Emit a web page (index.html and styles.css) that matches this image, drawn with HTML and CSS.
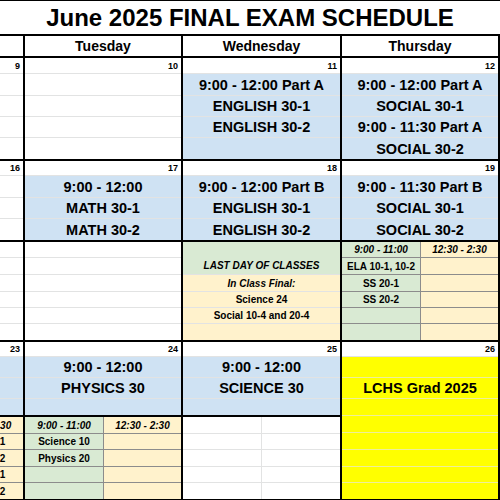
FILE: index.html
```html
<!DOCTYPE html>
<html>
<head>
<meta charset="utf-8">
<link rel="stylesheet" href="styles.css">
</head>
<body>
<div class="sheet">
  <div class="title">June 2025 FINAL EXAM SCHEDULE</div>
  <div class="grid">
    <div class="head"></div>
    <div class="head">Tuesday</div>
    <div class="head">Wednesday</div>
    <div class="head">Thursday</div>

    <!-- week 1 -->
    <div class="day">
      <div class="row h16 date">9</div>
      <div class="row h22"></div>
      <div class="row h21"></div>
      <div class="row h21"></div>
      <div class="row h21"></div>
    </div>
    <div class="day">
      <div class="row h16 date">10</div>
      <div class="row h22"></div>
      <div class="row h21"></div>
      <div class="row h21"></div>
      <div class="row h21"></div>
    </div>
    <div class="day">
      <div class="row h16 date">11</div>
      <div class="row h22 blue big">9:00 - 12:00 Part A</div>
      <div class="row h21 blue big">ENGLISH 30-1</div>
      <div class="row h21 blue big">ENGLISH 30-2</div>
      <div class="row h21 blue big"></div>
    </div>
    <div class="day">
      <div class="row h16 date">12</div>
      <div class="row h22 blue big">9:00 - 12:00 Part A</div>
      <div class="row h21 blue big">SOCIAL 30-1</div>
      <div class="row h21 blue big">9:00 - 11:30 Part A</div>
      <div class="row h21 blue big">SOCIAL 30-2</div>
    </div>

    <!-- week 2 top -->
    <div class="day">
      <div class="row h15 date">16</div>
      <div class="row h22"></div>
      <div class="row h21"></div>
      <div class="row h21"></div>
    </div>
    <div class="day">
      <div class="row h15 date">17</div>
      <div class="row h22 blue big">9:00 - 12:00</div>
      <div class="row h21 blue big">MATH 30-1</div>
      <div class="row h21 blue big">MATH 30-2</div>
    </div>
    <div class="day">
      <div class="row h15 date">18</div>
      <div class="row h22 blue big">9:00 - 12:00 Part B</div>
      <div class="row h21 blue big">ENGLISH 30-1</div>
      <div class="row h21 blue big">ENGLISH 30-2</div>
    </div>
    <div class="day">
      <div class="row h15 date">19</div>
      <div class="row h22 blue big">9:00 - 11:30 Part B</div>
      <div class="row h21 blue big">SOCIAL 30-1</div>
      <div class="row h21 blue big">SOCIAL 30-2</div>
    </div>

    <!-- week 2 bottom -->
    <div class="day">
      <div class="row h16"></div>
      <div class="row h17"></div>
      <div class="row h17"></div>
      <div class="row h16"></div>
      <div class="row h16"></div>
      <div class="row h16"></div>
    </div>
    <div class="day">
      <div class="row h16"></div>
      <div class="row h17"></div>
      <div class="row h17"></div>
      <div class="row h16"></div>
      <div class="row h16"></div>
      <div class="row h16"></div>
    </div>
    <div class="day">
      <div class="row h33 green small em bottom">LAST DAY OF CLASSES</div>
      <div class="row h17 cream small em">In Class Final:</div>
      <div class="row h16 cream small">Science 24</div>
      <div class="row h16 cream small">Social 10-4 and 20-4</div>
      <div class="row h16 cream"></div>
    </div>
    <div class="day split">
      <div class="col">
        <div class="row h16 green small em dark">9:00 - 11:00</div>
        <div class="row h17 green small dark">ELA 10-1, 10-2</div>
        <div class="row h17 green small dark">SS 20-1</div>
        <div class="row h16 green small dark">SS 20-2</div>
        <div class="row h16 green dark"></div>
        <div class="row h16 green dark"></div>
      </div>
      <div class="col">
        <div class="row h16 cream small em dark">12:30 - 2:30</div>
        <div class="row h17 cream dark"></div>
        <div class="row h17 cream dark"></div>
        <div class="row h16 cream dark"></div>
        <div class="row h16 cream dark"></div>
        <div class="row h16 cream dark"></div>
      </div>
    </div>

    <!-- week 3 top -->
    <div class="day">
      <div class="row h15 date">23</div>
      <div class="row h21 blue big"></div>
      <div class="row h21 blue big"></div>
      <div class="row h16 blue"></div>
    </div>
    <div class="day">
      <div class="row h15 date">24</div>
      <div class="row h21 blue big">9:00 - 12:00</div>
      <div class="row h21 blue big">PHYSICS 30</div>
      <div class="row h16 blue"></div>
    </div>
    <div class="day">
      <div class="row h15 date">25</div>
      <div class="row h21 blue big">9:00 - 12:00</div>
      <div class="row h21 blue big">SCIENCE 30</div>
      <div class="row h16 blue"></div>
    </div>
    <div class="day grad">
      <div class="row h15 date">26</div>
      <div class="row h21 yellow"></div>
      <div class="row h21 yellow big">LCHS Grad 2025</div>
      <div class="row h17 yellow"></div>
      <div class="row h17 yellow"></div>
      <div class="row h17 yellow"></div>
      <div class="row h17 yellow"></div>
      <div class="row h16 yellow"></div>
      <div class="row h16 yellow"></div>
    </div>

    <!-- week 3 bottom -->
    <div class="day split">
      <div class="col">
        <div class="row h17 green dark"></div>
        <div class="row h16 green dark"></div>
        <div class="row h17 green dark"></div>
        <div class="row h16 green dark"></div>
        <div class="row h16 green dark"></div>
      </div>
      <div class="col">
        <div class="row h17 cream small em dark">12:30 - 2:30</div>
        <div class="row h16 cream small dark">ELA 20-1</div>
        <div class="row h17 cream small dark">ELA 20-2</div>
        <div class="row h16 cream small dark">ELA 10-1</div>
        <div class="row h16 cream small dark">ELA 10-2</div>
      </div>
    </div>
    <div class="day split">
      <div class="col">
        <div class="row h17 green small em dark">9:00 - 11:00</div>
        <div class="row h16 green small dark">Science 10</div>
        <div class="row h17 green small dark">Physics 20</div>
        <div class="row h16 green dark"></div>
        <div class="row h16 green dark"></div>
      </div>
      <div class="col">
        <div class="row h17 cream small em dark">12:30 - 2:30</div>
        <div class="row h16 cream dark"></div>
        <div class="row h17 cream dark"></div>
        <div class="row h16 cream dark"></div>
        <div class="row h16 cream dark"></div>
      </div>
    </div>
    <div class="day split faint">
      <div class="col">
        <div class="row h17"></div>
        <div class="row h16"></div>
        <div class="row h17"></div>
        <div class="row h16"></div>
        <div class="row h16"></div>
      </div>
      <div class="col">
        <div class="row h17"></div>
        <div class="row h16"></div>
        <div class="row h17"></div>
        <div class="row h16"></div>
        <div class="row h16"></div>
      </div>
    </div>
  </div>
</div>
</body>
</html>
```

FILE: styles.css
```css
html, body {
  margin: 0;
  padding: 0;
  background: #fff;
}

body {
  font-family: "Liberation Sans", Arial, sans-serif;
  color: #000;
  overflow: hidden;
}

.sheet {
  width: 500px;
  height: 500px;
  overflow: hidden;
  border-top: 1px solid #000;
  box-sizing: border-box;
}

.title {
  height: 33px;
  line-height: 33px;
  text-align: center;
  font-size: 24px;
  font-weight: bold;
  white-space: nowrap;
}

.grid {
  display: grid;
  grid-template-columns: 157px 156px 157px 156px;
  grid-template-rows: 20px 101px 79px 98px 73px 82px;
  gap: 2px;
  padding: 2px;
  background: #000;
  width: max-content;
  margin-left: -136px;
}

.head {
  background: #fff;
  font-size: 14px;
  font-weight: bold;
  display: flex;
  align-items: center;
  justify-content: center;
}

.day {
  background: #fff;
  display: flex;
  flex-direction: column;
  overflow: hidden;
}

.grad {
  grid-row: 5 / span 2;
  grid-column: 4;
}

.split {
  display: grid;
  grid-template-columns: 79px 1fr;
}

.col {
  display: flex;
  flex-direction: column;
  min-width: 0;
}

.split > .col:first-child {
  border-right: 1px solid #8c8c8c;
}

.faint > .col:first-child {
  border-right-color: #e2e3e3;
}

.row {
  box-sizing: border-box;
  border-bottom: 1px solid #e2e3e3;
  display: flex;
  align-items: center;
  justify-content: center;
  white-space: nowrap;
  flex: none;
}

.row:last-child {
  border-bottom: none;
}

.row.dark {
  border-bottom-color: #8c8c8c;
}

.row.dark:last-child {
  border-bottom: none;
}

.h15 { height: 15px; }
.h16 { height: 16px; }
.h17 { height: 17px; }
.h21 { height: 21px; }
.h22 { height: 22px; }
.h33 { height: 33px; }

.date {
  justify-content: flex-end;
  padding-right: 3px;
  font-size: 9px;
  font-weight: bold;
  background: #fff;
}

.big {
  font-size: 14.5px;
  font-weight: bold;
}

.small {
  font-size: 10px;
  font-weight: bold;
}

.em {
  font-style: italic;
}

.bottom {
  align-items: flex-end;
  padding-bottom: 3px;
}

.blue { background: #cfe2f3; }
.green { background: #d9ead3; }
.cream { background: #fff2cc; }
.yellow {
  background: #ffff00;
  border-bottom-color: #eeee9a;
}
```
